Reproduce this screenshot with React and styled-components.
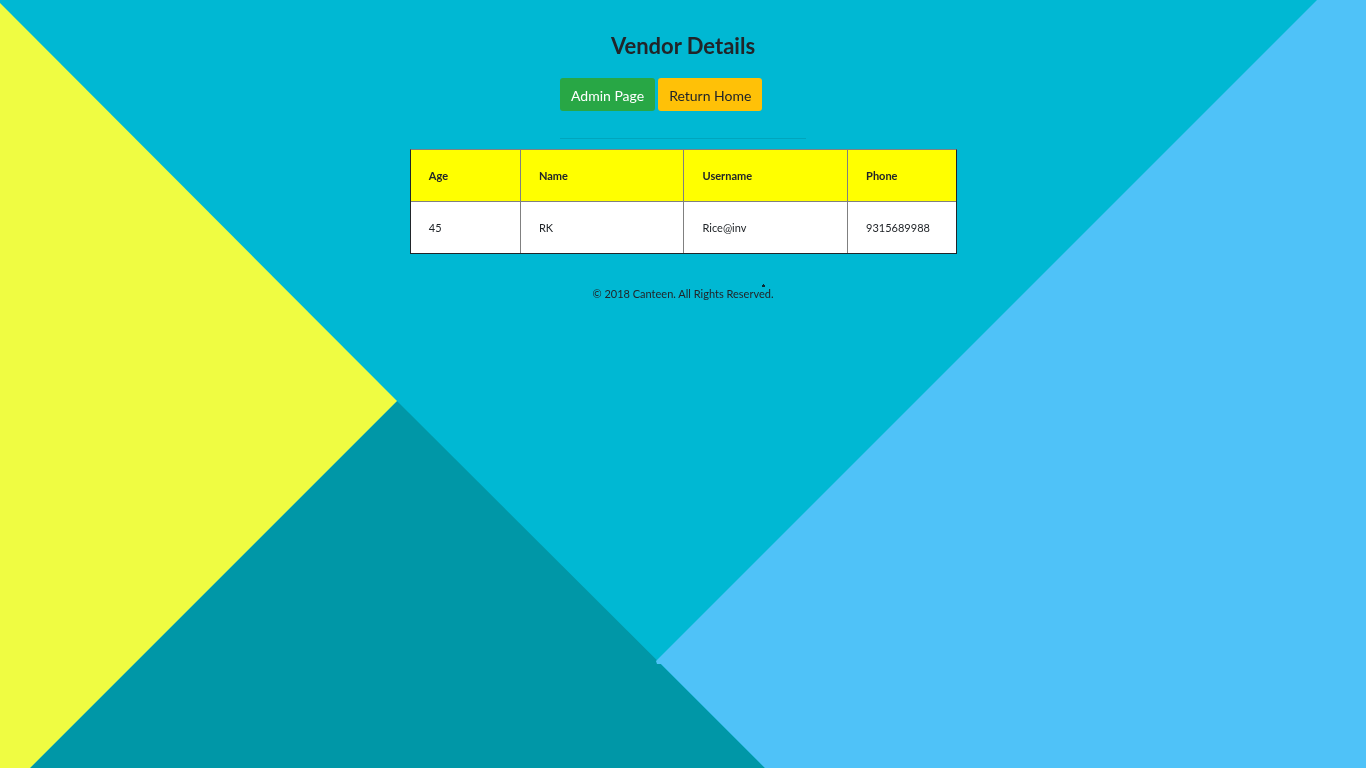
import React from "react";
import styled, { createGlobalStyle } from "styled-components";

const GlobalStyle = createGlobalStyle`
  *, *::before, *::after { box-sizing: border-box; }
  body {
    margin: 0;
    background: #00b8d4;
    color: #212529;
    font-family: "Segoe UI", Lato, "Open Sans", sans-serif;
    font-size: 11px;
    line-height: 16px;
  }
`;

const Backdrop = styled.svg`
  position: fixed;
  inset: 0;
  z-index: -1;
  width: 100%;
  height: 100%;
`;

const Page = styled.div`
  width: 40%;
  min-width: 360px;
  margin: 0 auto;
  padding-top: 32px;
`;

const Title = styled.h1`
  margin: 0 0 18px;
  font-size: 22px;
  font-weight: 700;
  line-height: 28px;
  text-align: center;
`;

const Toolbar = styled.header`
  width: 45%;
  min-width: 246px;
  margin: 0 auto;
`;

const Actions = styled.nav`
  display: flex;
  gap: 3px;
`;

const Button = styled.button`
  padding: 4px 11px 1px;
  border: 0;
  border-radius: 3px;
  background: ${(p) => (p.$tone === "success" ? "#28a745" : "#ffc107")};
  color: ${(p) => (p.$tone === "success" ? "#fff" : "#212529")};
  font-family: inherit;
  font-size: 14px;
  line-height: 28px;
  white-space: nowrap;
`;

const Divider = styled.hr`
  margin: 27px 0 10px;
  border: 0;
  border-top: 1px solid rgba(0, 0, 0, 0.1);
`;

const Table = styled.table`
  width: calc(100% + 1px);
  table-layout: fixed;
  border-collapse: separate;
  border-spacing: 0;
  border: 1px solid #212529;
  border-top-color: #808080;
  background: #fff;
  text-align: left;
`;

const HeadCell = styled.th`
  width: ${(p) => p.$width};
  padding: 18px 18px 17px;
  border: solid #808080;
  border-width: 0 0 1px 1px;
  background: #ffff00;
  font-weight: 700;
  &:first-child { border-left: 0; }
`;

const Cell = styled.td`
  padding: 18px 18px 17px;
  border-left: 1px solid #808080;
  &:first-child { border-left: 0; }
`;

const Footer = styled.footer`
  margin-top: 32px;
  text-align: center;
`;

const Notice = styled.p`
  position: relative;
  display: inline-block;
  margin: 0;
`;

const Speck = styled.svg`
  position: absolute;
  top: -2px;
  right: 9px;
  width: 3px;
  height: 3px;
`;

const columns = [
  { key: "age", label: "Age", width: "20%" },
  { key: "name", label: "Name", width: "30%" },
  { key: "username", label: "Username", width: "30%" },
  { key: "phone", label: "Phone", width: "20%" },
];

const vendors = [
  { age: "45", name: "RK", username: "Rice@inv", phone: "9315689988" },
];

export default function App() {
  return (
    <>
      <GlobalStyle />
      <Backdrop viewBox="0 0 1366 768" preserveAspectRatio="xMidYMid slice" aria-hidden="true">
        <rect width="1366" height="768" fill="#00b8d3" />
        <path d="M397 401 L765 768 H30 Z" fill="#0097a7" />
        <path d="M0 3 L397 401 L30 768 H0 Z" fill="#effc42" />
        <path d="M1317 0 H1366 V768 H765 L661 664 L657 664 L656 661 Z" fill="#4fc2f8" />
      </Backdrop>
      <Page>
        <Toolbar>
          <Title>Vendor Details</Title>
          <Actions>
            <Button type="button" $tone="success">Admin Page</Button>
            <Button type="button" $tone="warning">Return Home</Button>
          </Actions>
          <Divider />
        </Toolbar>
        <main>
          <Table>
            <thead>
              <tr>
                {columns.map((c) => (
                  <HeadCell key={c.key} scope="col" $width={c.width}>{c.label}</HeadCell>
                ))}
              </tr>
            </thead>
            <tbody>
              {vendors.map((v) => (
                <tr key={v.username}>
                  {columns.map((c) => <Cell key={c.key}>{v[c.key]}</Cell>)}
                </tr>
              ))}
            </tbody>
          </Table>
        </main>
        <Footer>
          <Notice>
            © 2018 Canteen. All Rights Reserved.
            <Speck viewBox="0 0 3 3" aria-hidden="true">
              <path d="M1 0 H2 V1 H3 V3 H0 V1 H1 Z" fill="#0b2a35" />
            </Speck>
          </Notice>
        </Footer>
      </Page>
    </>
  );
}
